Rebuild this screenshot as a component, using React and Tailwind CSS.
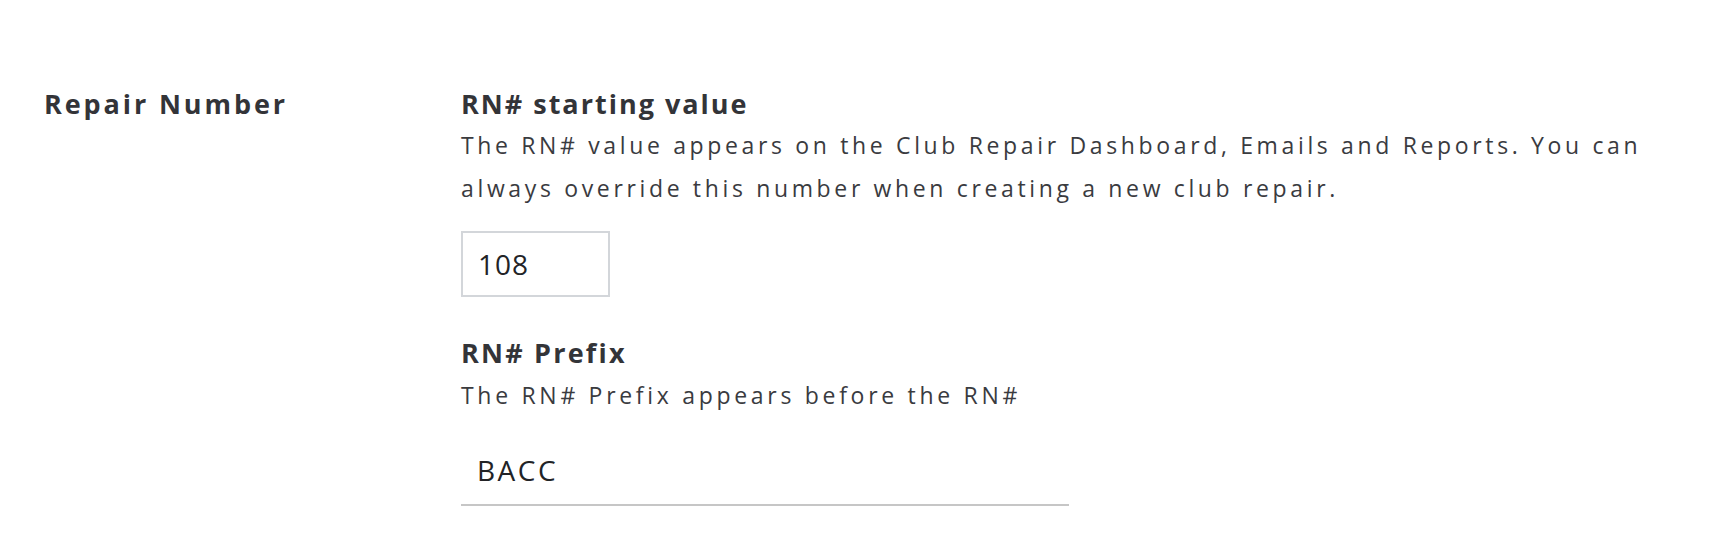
export default function App() {
  const font = { fontFamily: '"Open Sans", "Lato", sans-serif' };
  return (
    <div className="w-[1722px] h-[550px] bg-white text-[#333438]" style={font}>
      <div className="flex pl-[44px] pt-[86px]">
        <div className="w-[417px] shrink-0">
          <h2 className="text-[27px] leading-[36px] font-bold tracking-[2.9px] text-[#333438]">Repair Number</h2>
        </div>
        <div className="flex flex-col">
          <h3 className="text-[27px] leading-[36px] font-bold tracking-[2px] text-[#333438]">RN# starting value</h3>
          <p className="text-[23px] leading-[43px] tracking-[3.65px] text-[#3a3b3f] mt-[2px] w-[1240px]">
            The RN# value appears on the Club Repair Dashboard, Emails and Reports. You can always override this number when creating a new club repair.
          </p>
          <div className="mt-[21px] w-[149px] h-[66px] border-2 border-[#d3d6da] flex items-center pl-[15px]">
            <span className="text-[28px] tracking-[1px] text-[#222326]">108</span>
          </div>
          <h3 className="mt-[38px] text-[27px] leading-[36px] font-bold tracking-[2.2px] text-[#333438]">RN# Prefix</h3>
          <p className="text-[23px] leading-[43px] tracking-[3.7px] text-[#3a3b3f] mt-[3px]">The RN# Prefix appears before the RN#</p>
          <div className="mt-[18px] w-[608px] h-[71px] border-b-2 border-[#c6c6c6] flex items-center pl-[16px]">
            <span className="text-[28px] tracking-[2.5px] text-[#222326]">BACC</span>
          </div>
        </div>
      </div>
    </div>
  );
}
